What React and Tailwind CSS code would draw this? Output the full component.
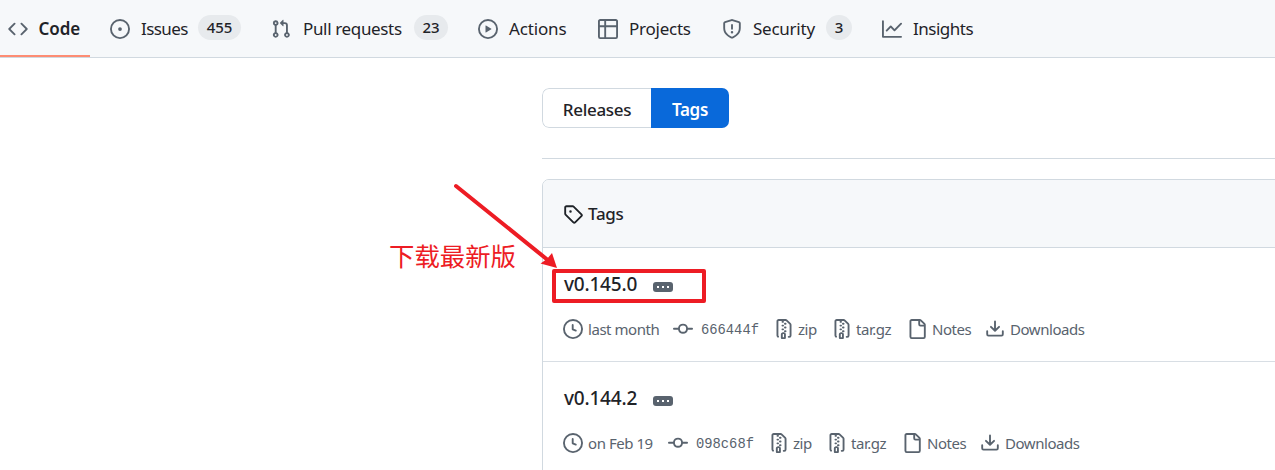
import React from "react";

const ICONS = {
  code: "m11.28 3.22 4.25 4.25a.75.75 0 0 1 0 1.06l-4.25 4.25a.749.749 0 0 1-1.275-.326.749.749 0 0 1 .215-.734L13.94 8l-3.72-3.72a.749.749 0 0 1 .326-1.275.749.749 0 0 1 .734.215Zm-6.56 0a.751.751 0 0 1 1.042.018.751.751 0 0 1 .018 1.042L2.06 8l3.72 3.72a.749.749 0 0 1-.326 1.275.749.749 0 0 1-.734-.215L.47 8.53a.75.75 0 0 1 0-1.06Z",
  issue: "M8 9.5a1.5 1.5 0 1 0 0-3 1.5 1.5 0 0 0 0 3ZM8 0a8 8 0 1 1 0 16A8 8 0 0 1 8 0ZM1.5 8a6.5 6.5 0 1 0 13 0 6.5 6.5 0 0 0-13 0Z",
  pull: "M1.5 3.25a2.25 2.25 0 1 1 3 2.122v5.256a2.251 2.251 0 1 1-1.5 0V5.372A2.25 2.25 0 0 1 1.5 3.25Zm5.677-.177L9.573.677A.25.25 0 0 1 10 .854V2.5h1A2.5 2.5 0 0 1 13.5 5v5.628a2.251 2.251 0 1 1-1.5 0V5a1 1 0 0 0-1-1h-1v1.646a.25.25 0 0 1-.427.177L7.177 3.427a.25.25 0 0 1 0-.354ZM3.75 2.5a.75.75 0 1 0 0 1.5.75.75 0 0 0 0-1.5Zm0 9.5a.75.75 0 1 0 0 1.5.75.75 0 0 0 0-1.5Zm8.25.75a.75.75 0 1 0 1.5 0 .75.75 0 0 0-1.5 0Z",
  play: "M8 0a8 8 0 1 1 0 16A8 8 0 0 1 8 0ZM1.5 8a6.5 6.5 0 1 0 13 0 6.5 6.5 0 0 0-13 0Zm4.879-2.773 4.264 2.559a.25.25 0 0 1 0 .428l-4.264 2.559A.25.25 0 0 1 6 10.559V5.442a.25.25 0 0 1 .379-.215Z",
  table: "M0 1.75C0 .784.784 0 1.75 0h12.5C15.216 0 16 .784 16 1.75v12.5A1.75 1.75 0 0 1 14.25 16H1.75A1.75 1.75 0 0 1 0 14.25ZM6.5 6.5v8h7.75a.25.25 0 0 0 .25-.25V6.5Zm8-1.5V1.75a.25.25 0 0 0-.25-.25H6.5V5Zm-13 1.5v7.75c0 .138.112.25.25.25H5v-8ZM5 5V1.5H1.75a.25.25 0 0 0-.25.25V5Z",
  shield: "M7.467.133a1.748 1.748 0 0 1 1.066 0l5.25 1.68A1.75 1.75 0 0 1 15 3.48V7c0 1.566-.32 3.182-1.303 4.682-.983 1.498-2.585 2.813-5.032 3.855a1.697 1.697 0 0 1-1.33 0c-2.447-1.042-4.049-2.357-5.032-3.855C1.32 10.182 1 8.566 1 7V3.48a1.75 1.75 0 0 1 1.217-1.667Zm.61 1.429a.25.25 0 0 0-.153 0l-5.25 1.68a.25.25 0 0 0-.174.238V7c0 1.358.275 2.666 1.057 3.86.784 1.194 2.121 2.34 4.366 3.297a.196.196 0 0 0 .154 0c2.245-.956 3.582-2.104 4.366-3.298C13.225 9.666 13.5 8.36 13.5 7V3.48a.251.251 0 0 0-.174-.237l-5.25-1.68ZM8.75 4.75v3a.75.75 0 0 1-1.5 0v-3a.75.75 0 0 1 1.5 0ZM9 10.5a1 1 0 1 1-2 0 1 1 0 0 1 2 0Z",
  graph: "M1.5 1.75V13.5h13.75a.75.75 0 0 1 0 1.5H.75a.75.75 0 0 1-.75-.75V1.75a.75.75 0 0 1 1.5 0Zm14.28 2.53-5.25 5.25a.75.75 0 0 1-1.06 0L7 7.06 4.28 9.78a.751.751 0 0 1-1.042-.018.751.751 0 0 1-.018-1.042l3.25-3.25a.75.75 0 0 1 1.06 0L10 7.94l4.72-4.72a.751.751 0 0 1 1.042.018.751.751 0 0 1 .018 1.042Z",
  tag: "M1 7.775V2.75C1 1.784 1.784 1 2.75 1h5.025c.464 0 .91.184 1.238.513l6.25 6.25a1.75 1.75 0 0 1 0 2.474l-5.026 5.026a1.75 1.75 0 0 1-2.474 0l-6.25-6.25A1.752 1.752 0 0 1 1 7.775Zm1.5 0c0 .066.026.13.073.177l6.25 6.25a.25.25 0 0 0 .354 0l5.025-5.025a.25.25 0 0 0 0-.354l-6.25-6.25a.25.25 0 0 0-.177-.073H2.75a.25.25 0 0 0-.25.25ZM6 5a1 1 0 1 1 0 2 1 1 0 0 1 0-2Z",
  clock: "M8 0a8 8 0 1 1 0 16A8 8 0 0 1 8 0ZM1.5 8a6.5 6.5 0 1 0 13 0 6.5 6.5 0 0 0-13 0Zm7-3.25v2.992l2.028.812a.75.75 0 0 1-.557 1.392l-2.5-1A.751.751 0 0 1 7 8.25v-3.5a.75.75 0 0 1 1.5 0Z",
  commit: "M11.93 8.5a4.002 4.002 0 0 1-7.86 0H.75a.75.75 0 0 1 0-1.5h3.32a4.002 4.002 0 0 1 7.86 0h3.32a.75.75 0 0 1 0 1.5Zm-1.43-.75a2.5 2.5 0 1 0-5 0 2.5 2.5 0 0 0 5 0Z",
  zip: "M3.5 1.75v11.5c0 .09.048.173.126.217a.75.75 0 0 1-.752 1.298A1.748 1.748 0 0 1 2 13.25V1.75C2 .784 2.784 0 3.75 0h5.586c.464 0 .909.185 1.237.513l2.914 2.914c.329.328.513.773.513 1.237v8.586A1.75 1.75 0 0 1 12.25 15h-.5a.75.75 0 0 1 0-1.5h.5a.25.25 0 0 0 .25-.25V4.664a.25.25 0 0 0-.073-.177L9.513 1.573a.25.25 0 0 0-.177-.073H7.25a.75.75 0 0 1 0 1.5h-.5a.75.75 0 0 1 0-1.5h-3a.25.25 0 0 0-.25.25Zm3.75 8.75h.5c.966 0 1.75.784 1.75 1.75v3a.75.75 0 0 1-.75.75h-2.5a.75.75 0 0 1-.75-.75v-3c0-.966.784-1.75 1.75-1.75ZM6 5.25a.75.75 0 0 1 .75-.75h.5a.75.75 0 0 1 0 1.5h-.5A.75.75 0 0 1 6 5.25Zm.75 2.25h.5a.75.75 0 0 1 0 1.5h-.5a.75.75 0 0 1 0-1.5ZM8 6.75A.75.75 0 0 1 8.75 6h.5a.75.75 0 0 1 0 1.5h-.5A.75.75 0 0 1 8 6.75ZM8.75 3h.5a.75.75 0 0 1 0 1.5h-.5a.75.75 0 0 1 0-1.5ZM8 9.75A.75.75 0 0 1 8.75 9h.5a.75.75 0 0 1 0 1.5h-.5A.75.75 0 0 1 8 9.75Zm-1 2.5v2.25h1v-2.25a.25.25 0 0 0-.25-.25h-.5a.25.25 0 0 0-.25.25Z",
  file: "M2 1.75C2 .784 2.784 0 3.75 0h6.586c.464 0 .909.184 1.237.513l2.914 2.914c.329.328.513.773.513 1.237v9.586A1.75 1.75 0 0 1 13.25 16h-9.5A1.75 1.75 0 0 1 2 14.25Zm1.75-.25a.25.25 0 0 0-.25.25v12.5c0 .138.112.25.25.25h9.5a.25.25 0 0 0 .25-.25V6h-2.75A1.75 1.75 0 0 1 9 4.25V1.5Zm6.75.062V4.25c0 .138.112.25.25.25h2.688l-.011-.013-2.914-2.914-.013-.011Z",
  download: "M2.75 14A1.75 1.75 0 0 1 1 12.25v-2.5a.75.75 0 0 1 1.5 0v2.5c0 .138.112.25.25.25h10.5a.25.25 0 0 0 .25-.25v-2.5a.75.75 0 0 1 1.5 0v2.5A1.75 1.75 0 0 1 13.25 14ZM7.25 7.689V2a.75.75 0 0 1 1.5 0v5.689l1.97-1.969a.749.749 0 1 1 1.06 1.06l-3.25 3.25a.749.749 0 0 1-1.06 0L4.22 6.78a.749.749 0 1 1 1.06-1.06l1.97 1.969Z",
};

function Icon({ name, className = "" }) {
  return (
    <svg viewBox="0 0 16 16" fill="currentColor" className={`size-5 shrink-0 ${className}`}>
      <path d={ICONS[name]} />
    </svg>
  );
}

const NAV = [
  { icon: "code", label: "Code", item: "w-[102px]", text: "ml-[10.5px] w-[41.5px] font-semibold tracking-[-0.1px]" },
  { icon: "issue", label: "Issues", item: "w-[161px]", text: "ml-[11px] w-[47px] tracking-[-0.6px]", count: "455", badge: "w-[43px]" },
  { icon: "pull", label: "Pull requests", item: "w-[207px]", text: "ml-[12px] w-[101px] tracking-[-0.35px]", count: "23", badge: "w-[34px]" },
  { icon: "play", label: "Actions", item: "w-[120px]", text: "ml-[11px] w-[59px] tracking-[-0.15px]" },
  { icon: "table", label: "Projects", item: "w-[124px]", text: "ml-[11px] w-[63px] tracking-[-0.25px]" },
  { icon: "shield", label: "Security", item: "w-[160px]", text: "ml-[11px] w-[63px] tracking-[-0.25px]", count: "3", badge: "w-[26px]" },
  { icon: "graph", label: "Insights", item: "w-[100px]", text: "ml-[11px] w-[62px] tracking-[-0.5px]" },
];

const RELEASES = [
  { version: "v0.145.0", date: "last month", dateWidth: "w-[86px]", hash: "666444f" },
  { version: "v0.144.2", date: "on Feb 19", dateWidth: "w-[81px]", hash: "098c68f" },
];

function Meta({ icon, label, gap = "gap-1", width }) {
  return (
    <span className={`flex shrink-0 items-center ${gap} ${width}`}>
      <Icon name={icon} className="-mt-px" />
      <span className="whitespace-nowrap">{label}</span>
    </span>
  );
}

function ReleaseRow({ release, highlighted }) {
  return (
    <li className="h-[114px] border-b border-[#d8dee4] pl-5">
      <div className="relative flex h-[74px] items-center">
        <h4 className="mb-[2px] w-[90px] pl-px text-[19px] font-medium tracking-[-0.2px] text-[#1f2328]">{release.version}</h4>
        <span className="mt-1 flex h-[10px] w-5 items-center justify-center gap-[3px] rounded-[3px] bg-[#59636e]">
          <i className="size-[2px] bg-white" />
          <i className="size-[2px] bg-white" />
          <i className="size-[2px] bg-white" />
        </span>
        {highlighted && (
          <span className="absolute top-[21px] left-[-11px] h-[34px] w-[154px] rounded-[2px] border-4 border-[#ed1c24]" />
        )}
      </div>
      <div className="flex h-[15px] items-center text-[15px] tracking-[-0.45px] text-[#59636e]">
        <Meta icon="clock" label={release.date} gap="gap-[5px]" width={`${release.dateWidth} mr-6`} />
        <span className="flex w-[101px] shrink-0 items-center gap-2">
          <Icon name="commit" className="-mt-px" />
          <span className="mt-[3px] font-['Liberation_Mono',monospace] text-[13.8px] tracking-normal">{release.hash}</span>
        </span>
        <Meta icon="zip" label="zip" width="w-[58px]" />
        <Meta icon="zip" label="tar.gz" width="w-[75px]" />
        <Meta icon="file" label="Notes" gap="gap-[5px]" width="w-[78px]" />
        <Meta icon="download" label="Downloads" gap="gap-[5px]" width="w-[100px]" />
      </div>
    </li>
  );
}

export default function App() {
  return (
    <div className="relative h-[470px] w-full overflow-hidden bg-white font-['Noto_Sans',sans-serif] text-[#1f2328]">
      <nav className="flex h-[58px] items-stretch border-b border-[#d1d9e0] bg-[#f6f8fa] pl-2">
        {NAV.map((n) => (
          <a key={n.label} className={`relative flex shrink-0 items-center ${n.item}`}>
            <Icon name={n.icon} className="text-[#59636e]" />
            <span className={`text-[17px] whitespace-nowrap ${n.text}`}>{n.label}</span>
            {n.count && (
              <span className={`mb-[2px] ml-[10px] flex h-[25px] items-center justify-center rounded-full bg-[#e7eaed] text-[15px] font-medium ${n.badge}`}>
                {n.count}
              </span>
            )}
            {n.icon === "code" && <span className="absolute bottom-0 left-[-8px] h-[2px] w-[90px] bg-[#fd8c73]" />}
          </a>
        ))}
      </nav>

      <main className="ml-[542px] pt-[30px]">
        <div className="flex h-10 w-[187px] overflow-hidden rounded-[7px] text-[17px] font-medium tracking-[-0.3px]">
          <a className="flex w-[109px] items-center justify-center rounded-l-[7px] border border-r-0 border-[#d1d9e0] pt-1">
            Releases
          </a>
          <a className="flex w-[78px] items-center justify-center bg-[#0969da] pt-1 font-semibold text-white">Tags</a>
        </div>

        <section className="mt-[30px] border-t border-[#d1d9e0] pt-5">
          <div className="h-[320px] w-[760px] overflow-hidden rounded-tl-[7px] border border-[#d1d9e0]">
            <header className="flex h-[68px] items-center gap-[5px] border-b border-[#d1d9e0] bg-[#f6f8fa] pl-5 text-[17px] font-medium tracking-[-0.3px]">
              <Icon name="tag" />
              Tags
            </header>
            <ul>
              {RELEASES.map((r, i) => (
                <ReleaseRow key={r.version} release={r} highlighted={i === 0} />
              ))}
            </ul>
          </div>
        </section>
      </main>

      <div className="absolute top-[237px] left-[389px] font-['Noto_Sans_CJK_SC',sans-serif] text-[25.4px] leading-9 font-normal whitespace-nowrap text-[#ed1c24]">
        下载最新版
      </div>
      <svg className="absolute top-[180px] left-[450px] h-[92px] w-[112px]" viewBox="450 180 112 92">
        <path d="M456 186 549 261" stroke="#ed1c24" strokeWidth="4" strokeLinecap="round" />
        <path d="M557 268 552 253 547 259 540.5 263.5Z" fill="#ed1c24" />
      </svg>
    </div>
  );
}
